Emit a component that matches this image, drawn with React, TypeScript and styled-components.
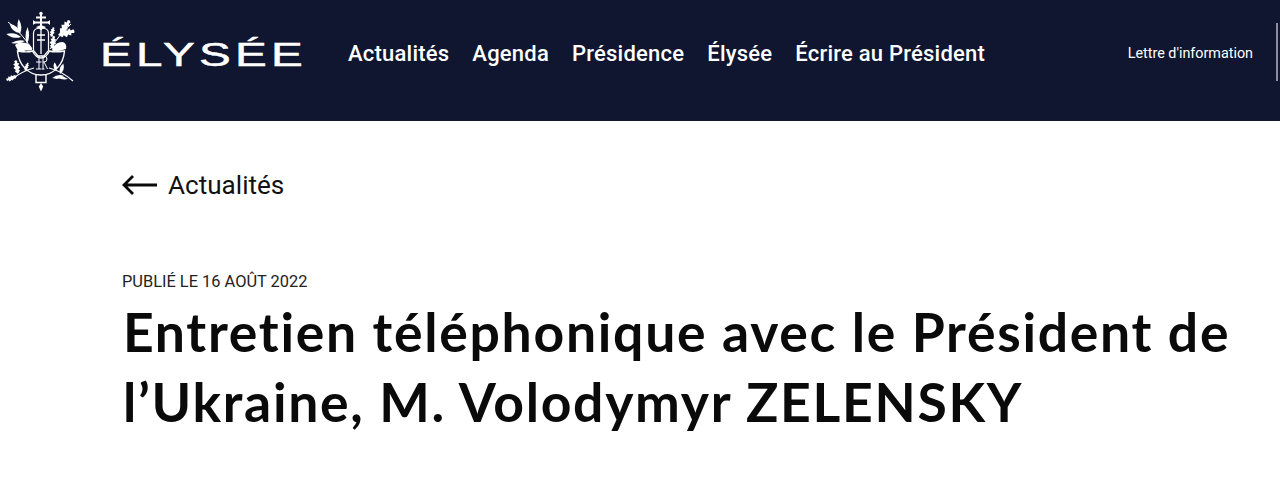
import React from "react";
import styled, { createGlobalStyle } from "styled-components";

const Global = createGlobalStyle`
  html, body { margin: 0; padding: 0; background: #fff; overflow: hidden; }
  * { box-sizing: border-box; }
`;
const Header = styled.header`
  height: 121px;
  background: #10162f;
  display: flex;
  align-items: flex-start;
  color: #fff;
  overflow: hidden;
`;
const Emblem = styled.svg`
  width: 72px;
  height: 84px;
  margin: 10px 0 0 5px;
  flex: none;
`;
const Wordmark = styled.a`
  font: 400 34px/1 "Liberation Sans", sans-serif;
  letter-spacing: 3px;
  -webkit-text-stroke: 0.5px #fff;
  margin: 37px 0 0 23px;
  width: 199px;
  display: block;
  flex: none;
  white-space: nowrap;
  transform: scaleX(1.4);
  transform-origin: left center;
`;
const Nav = styled.nav`
  display: flex;
  gap: 23px;
  margin: 42px 0 0 49px;
`;
const NavLink = styled.a`
  font: 500 22px/24px Roboto, sans-serif;
  letter-spacing: 0.22px;
  white-space: nowrap;
`;
const Side = styled.div`
  margin-left: auto;
  display: flex;
  align-items: flex-start;
`;
const Letter = styled.a`
  font: 400 14.35px/16px Roboto, sans-serif;
  margin-top: 46px;
  white-space: nowrap;
`;
const Rule = styled.div`
  width: 2px;
  height: 58px;
  margin: 23px 2px 0 23px;
  background: #8a8e9c;
`;
const Main = styled.main`
  padding: 48px 0 0 122px;
`;
const Back = styled.a`
  display: flex;
  align-items: center;
  gap: 10px;
  font: 400 26.1px/32px Roboto, sans-serif;
  color: #111;
`;
const PublishDate = styled.p`
  margin: 71px 0 0;
  font: 400 16.4px/20px Roboto, sans-serif;
  color: #222;
`;
const Title = styled.h1`
  margin: 4px 0 0 1px;
  font: 700 53.5px/70px Lato, sans-serif;
  letter-spacing: 1.7px;
  color: #0a0a0a;
  width: 1140px;
`;

/* A slender olive leaf running from (x,y) at angle a (degrees). */
function Olive({ x, y, l, a, w = 2.2 }: { x: number; y: number; l: number; a: number; w?: number }) {
  return (
    <path
      transform={`translate(${x} ${y}) rotate(${a})`}
      d={`M0 0Q${l * 0.45} ${-w * 1.6} ${l} 0Q${l * 0.45} ${w * 1.6} 0 0z`}
      fill="#fff"
    />
  );
}

/* A lobed oak leaf running from (x,y) at angle a (degrees). */
function Oak({ x, y, s, a }: { x: number; y: number; s: number; a: number }) {
  return (
    <g transform={`translate(${x} ${y}) rotate(${a}) scale(${s})`} fill="#fff">
      <path d="M0 0L3 -2.4L4 -1.2L6 -3.2L7.4 -1.4L9.4 -2.8L10 -1L12 -1.4L12.6 0L12 1.4L10 1L9.4 2.8L7.4 1.4L6 3.2L4 1.2L3 2.4z" />
    </g>
  );
}

export default function App() {
  return (
    <>
      <Global />
      <Header>
        <Emblem viewBox="5 10 72 84" aria-hidden="true">
          {/* cross */}
          <path d="M41 13v17M36 17.5h10M34 22.5h15" stroke="#fff" strokeWidth="2" fill="none" />
          <circle cx="41" cy="13.5" r="1.7" fill="#fff" />
          <path d="M33 20l3 2.5-3 2.5zM50 20l-3 2.5 3 2.5z" fill="#fff" />
          <path d="M36 27l5-2 5 2-5 3z" fill="#fff" />
          {/* fasces */}
          <path d="M33.5 50V33q0-5 7.5-5t7.5 5v17" stroke="#fff" strokeWidth="1.2" fill="none" />
          <path d="M41 30v24M37 35h8M37 40h8" stroke="#fff" strokeWidth="1.3" fill="none" />
          <path d="M33 50l5 6h6l5-6" stroke="#fff" strokeWidth="1.2" fill="none" />
          {/* shield */}
          <path d="M17.5 51c6 1 12 1 15 0 2 4 5 7 8.5 7s6.500-3 8.500-7c3 1 9 1 15 0-1 13-10 24-23.500 24S18.500 64 17.500 51z" stroke="#fff" strokeWidth="1.4" fill="none" />
          <path d="M36 74v8.500h10V74" stroke="#fff" strokeWidth="1.4" fill="none" />
          <path d="M41 83l2.200 3.500-2.200 5-2.200-5z" fill="#fff" />
          {/* RF monogram */}
          <path d="M39 56v13M36 56h6M36 62h5.500M43 56v13M36 69h5M41.500 56h2.500q3 0 3 3t-3 3h-1M44 62l3.500 7M41.500 69h3" stroke="#fff" strokeWidth="1" fill="none" />
          {/* olive branch */}
          <path d="M8 22c8 6 15 14 24 27" stroke="#fff" strokeWidth="1" fill="none" />
          <Olive x={20} y={33} l={14} a={222} w={3} />
          <Olive x={21} y={37} l={15} a={192} w={2.6} />
          <Olive x={20} y={34} l={15} a={265} w={2.4} />
          <Olive x={27} y={44} l={17} a={272} w={2.2} />
          <Olive x={25} y={41} l={14} a={172} w={1.8} />
          <path d="M15 45c3-3 8-3 11-2 3 1 6 3 6 7-4 1-6 0-8 1-3 1-6 1-7-2z" fill="#fff" />
          {/* oak branch */}
          <path d="M50 49c6-9 13-18 21-25" stroke="#fff" strokeWidth="1" fill="none" />
          <Oak x={60} y={33} s={1.25} a={-52} />
          <Oak x={58} y={35} s={1.35} a={-14} />
          <Oak x={51} y={37} s={0.8} a={-75} />
          <Oak x={52} y={49} s={1.05} a={-82} />
          <path d="M52 50c1-4 5-8 10-8 3 0 5 3 4 7-4 1-6 2-8 2s-5 1-6-1z" fill="#fff" />
          {/* lower left branch */}
          <path d="M9 81c8-6 16-11 25-13" stroke="#fff" strokeWidth="1.2" fill="none" />
          <Oak x={18} y={74} s={1.1} a={-100} />
          <Oak x={17} y={76} s={0.9} a={160} />
          <Oak x={25} y={71} s={0.7} a={-70} />
          {/* lower right branch */}
          <path d="M73 81c-7-6-14-11-24-13" stroke="#fff" strokeWidth="1.2" fill="none" />
          <Olive x={60} y={74} l={11} a={-72} w={2.4} />
          <Olive x={56} y={71} l={9} a={-100} w={2} />
          <Olive x={64} y={76} l={12} a={170} w={2.2} />
          <Olive x={68} y={79} l={13} a={192} w={1.8} />
        </Emblem>
        <Wordmark>ÉLYSÉE</Wordmark>
        <Nav>
          <NavLink>Actualités</NavLink>
          <NavLink>Agenda</NavLink>
          <NavLink>Présidence</NavLink>
          <NavLink>Élysée</NavLink>
          <NavLink>Écrire au Président</NavLink>
        </Nav>
        <Side>
          <Letter>Lettre d'information</Letter>
          <Rule />
        </Side>
      </Header>
      <Main>
        <Back>
          <svg width="36" height="24" viewBox="0 0 36 24" fill="none" stroke="#0a0a0a" strokeWidth="2.8">
            <path d="M35 12H2M11 3l-9 9 9 9" />
          </svg>
          Actualités
        </Back>
        <PublishDate>PUBLIÉ LE 16 AOÛT 2022</PublishDate>
        <Title>Entretien téléphonique avec le Président de l’Ukraine, M. Volodymyr ZELENSKY</Title>
      </Main>
    </>
  );
}
